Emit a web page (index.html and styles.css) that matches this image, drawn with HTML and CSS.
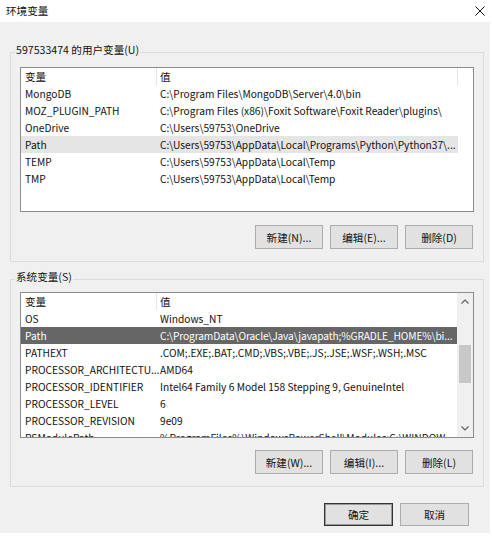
FILE: index.html
```html
<!DOCTYPE html>
<html lang="zh-CN">
<head>
    <meta charset="UTF-8">
    <title>环境变量</title>
    <link rel="stylesheet" href="styles.css">
</head>
<body>
    <div class="window">
        <div class="titlebar">
            <span class="title">环境变量</span>
            <svg class="close" width="10" height="10" viewBox="0 0 10 10">
                <path d="M0.5 0.5 L9.5 9.5 M9.5 0.5 L0.5 9.5" stroke="#111" stroke-width="1" fill="none"/>
            </svg>
        </div>

        <div class="content">
            <!-- 用户变量 -->
            <fieldset class="group group-user">
                <legend>597533474 的用户变量(U)</legend>
                <div class="list list-user">
                    <div class="list-head">
                        <span class="cell-name">变量</span>
                        <span class="cell-value">值</span>
                    </div>
                    <div class="row"><span class="cell-name">MongoDB</span><span class="cell-value">C:\Program Files\MongoDB\Server\4.0\bin</span></div>
                    <div class="row"><span class="cell-name">MOZ_PLUGIN_PATH</span><span class="cell-value">C:\Program Files (x86)\Foxit Software\Foxit Reader\plugins\</span></div>
                    <div class="row"><span class="cell-name">OneDrive</span><span class="cell-value">C:\Users\59753\OneDrive</span></div>
                    <div class="row selected"><span class="cell-name">Path</span><span class="cell-value">C:\Users\59753\AppData\Local\Programs\Python\Python37\...</span></div>
                    <div class="row"><span class="cell-name">TEMP</span><span class="cell-value">C:\Users\59753\AppData\Local\Temp</span></div>
                    <div class="row"><span class="cell-name">TMP</span><span class="cell-value">C:\Users\59753\AppData\Local\Temp</span></div>
                </div>
                <div class="buttons">
                    <button class="btn">新建(N)...</button>
                    <button class="btn">编辑(E)...</button>
                    <button class="btn">删除(D)</button>
                </div>
            </fieldset>

            <!-- 系统变量 -->
            <fieldset class="group group-system">
                <legend>系统变量(S)</legend>
                <div class="list list-system">
                    <div class="list-main">
                        <div class="list-head">
                            <span class="cell-name">变量</span>
                            <span class="cell-value">值</span>
                        </div>
                        <div class="row"><span class="cell-name">OS</span><span class="cell-value">Windows_NT</span></div>
                        <div class="row active"><span class="cell-name">Path</span><span class="cell-value tight">C:\ProgramData\Oracle\Java\javapath;%GRADLE_HOME%\bi...</span></div>
                        <div class="row"><span class="cell-name">PATHEXT</span><span class="cell-value">.COM;.EXE;.BAT;.CMD;.VBS;.VBE;.JS;.JSE;.WSF;.WSH;.MSC</span></div>
                        <div class="row"><span class="cell-name">PROCESSOR_ARCHITECTU...</span><span class="cell-value">AMD64</span></div>
                        <div class="row"><span class="cell-name">PROCESSOR_IDENTIFIER</span><span class="cell-value">Intel64 Family 6 Model 158 Stepping 9, GenuineIntel</span></div>
                        <div class="row"><span class="cell-name">PROCESSOR_LEVEL</span><span class="cell-value">6</span></div>
                        <div class="row"><span class="cell-name">PROCESSOR_REVISION</span><span class="cell-value">9e09</span></div>
                        <div class="row"><span class="cell-name">PSModulePath</span><span class="cell-value">%ProgramFiles%\WindowsPowerShell\Modules;C:\WINDOW...</span></div>
                    </div>
                    <div class="scrollbar">
                        <div class="arrow">
                            <svg width="8" height="5" viewBox="0 0 8 5"><path d="M0.5 4.5 L4 1 L7.5 4.5" stroke="#606060" stroke-width="1.2" fill="none"/></svg>
                        </div>
                        <div class="track">
                            <div class="thumb"></div>
                        </div>
                        <div class="arrow">
                            <svg width="8" height="5" viewBox="0 0 8 5"><path d="M0.5 0.5 L4 4 L7.5 0.5" stroke="#606060" stroke-width="1.2" fill="none"/></svg>
                        </div>
                    </div>
                </div>
                <div class="buttons">
                    <button class="btn">新建(W)...</button>
                    <button class="btn">编辑(I)...</button>
                    <button class="btn">删除(L)</button>
                </div>
            </fieldset>

            <div class="footer">
                <button class="btn btn-wide btn-default">确定</button>
                <button class="btn btn-wide">取消</button>
            </div>
        </div>
    </div>
</body>
</html>
```

FILE: styles.css
```css
* {
    margin: 0;
    padding: 0;
    box-sizing: border-box;
}

body {
    background: #ffffff;
    font-family: "Noto Sans CJK SC", "Noto Sans", sans-serif;
    font-size: 10.6px;
    color: #111;
}

.window {
    width: 490px;
    height: 533px;
    background: #f0f0f0;
}

.titlebar {
    height: 22px;
    background: #ffffff;
    display: flex;
    align-items: center;
    justify-content: space-between;
    padding: 0 5px 0 6px;
}

.title {
    line-height: 20px;
}

.content {
    padding: 20px 6px 0 10px;
}

/* group boxes */
.group {
    width: 474px;
    border: 1px solid #dcdcdc;
    padding: 5px 9px 12px;
}

.group-system {
    margin-top: 7px;
    padding-top: 3px;
}

.group legend {
    margin-left: -5px;
    padding: 0 1px 4px;
    line-height: 16px;
}

/* list views */
.list {
    background: #ffffff;
    border: 1px solid #8c8c8c;
    height: 145px;
    overflow: hidden;
}

.list-system {
    height: 146px;
    display: flex;
}

.list-main {
    width: 436px;
    overflow: hidden;
}

.list-head,
.row {
    display: flex;
    height: 17px;
    line-height: 17px;
    width: 437px;
    white-space: nowrap;
}

.row {
    font-size: 10.2px;
}

.cell-name {
    width: 139px;
    padding: 0 3px 0 4px;
    overflow: hidden;
}

.cell-value {
    flex: 1;
    overflow: hidden;
    text-overflow: ellipsis;
}

.cell-value.tight {
    letter-spacing: -0.12px;
}

.list-head .cell-name {
    width: 136px;
    border-right: 1px solid #e5e5e5;
}

.list-head .cell-value {
    padding-left: 3px;
    border-right: 1px solid #e5e5e5;
}

.row.selected {
    background: #e5e5e5;
}

.row.active {
    background: #666666;
    color: #ffffff;
}

/* scrollbar */
.scrollbar {
    width: 16px;
    background: #f0f0f0;
    display: flex;
    flex-direction: column;
}

.arrow {
    height: 17px;
    display: flex;
    align-items: center;
    justify-content: center;
}

.track {
    flex: 1;
    padding: 35px 2px 0;
}

.thumb {
    height: 38px;
    background: #c8c8c8;
}

/* buttons */
.buttons {
    display: flex;
    justify-content: flex-end;
    gap: 7px;
    margin-top: 13px;
    padding-right: 1px;
}

.group-system .buttons {
    margin-top: 12px;
}

.btn {
    width: 68px;
    height: 24px;
    background: #e1e1e1;
    border: 1px solid #adadad;
    font-family: inherit;
    font-size: 10.6px;
    color: #111;
}

.footer {
    display: flex;
    justify-content: flex-end;
    gap: 7px;
    margin-top: 16px;
    padding-right: 15px;
}

.btn-wide {
    width: 69px;
    height: 23px;
}

.btn-default {
    border: 1px solid #333333;
    box-shadow: inset 0 0 0 1px #9a9a9a;
}
```
